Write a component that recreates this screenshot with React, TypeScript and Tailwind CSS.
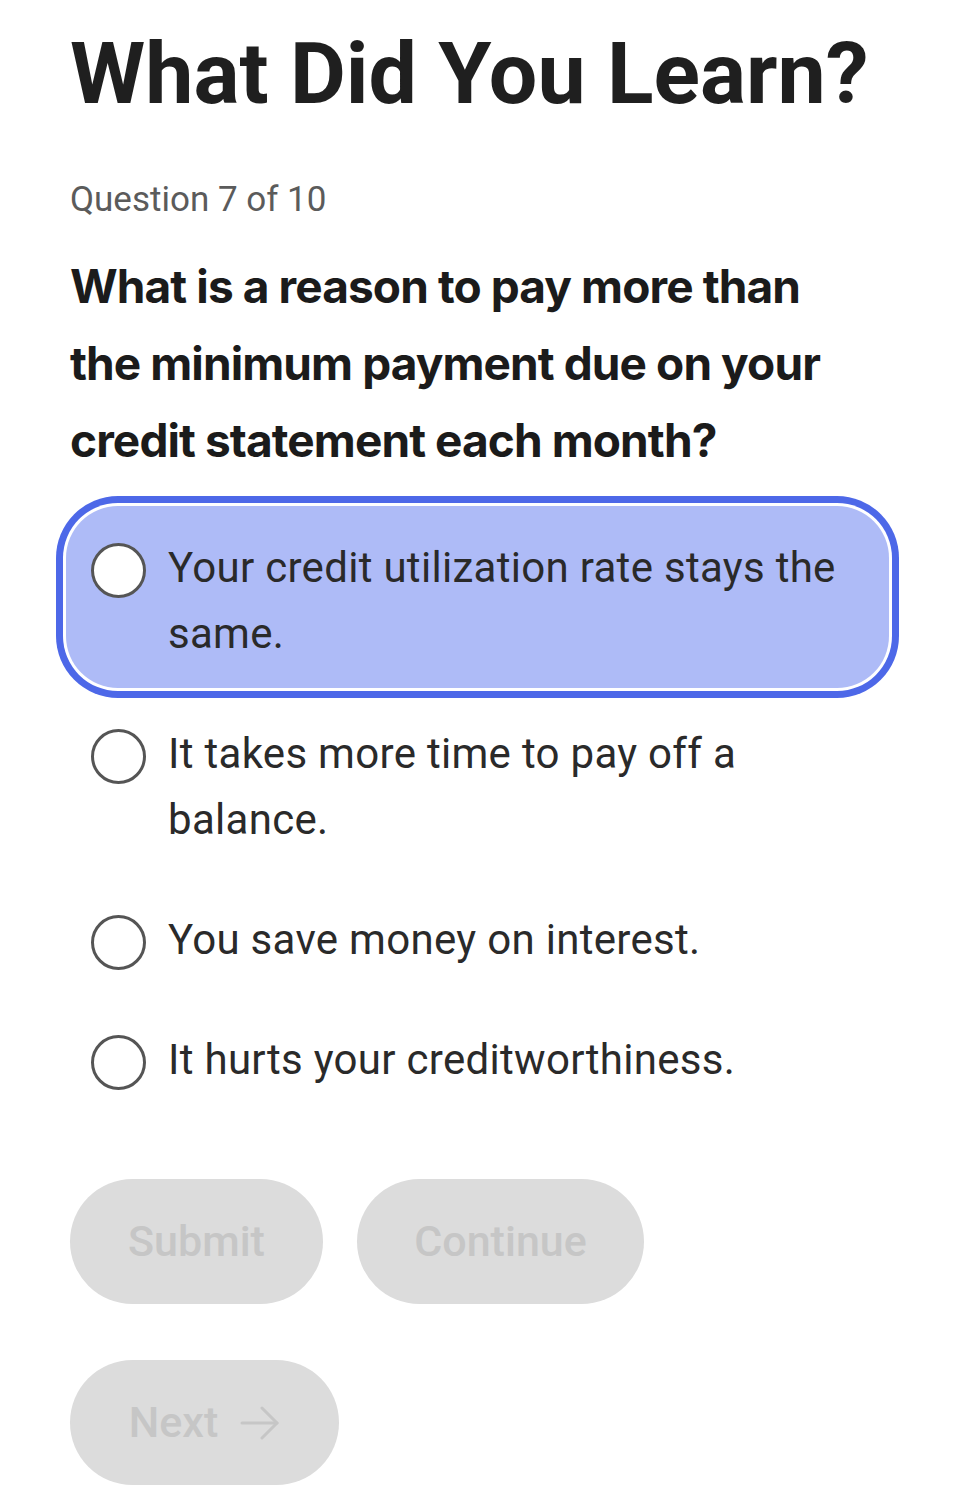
import React, { useState } from "react";

const body = { fontFamily: "Roboto, 'Liberation Sans', sans-serif" };
const strong = { fontFamily: "Inter, 'Noto Sans', sans-serif" };

const options = [
  "Your credit utilization rate stays the same.",
  "It takes more time to pay off a balance.",
  "You save money on interest.",
  "It hurts your creditworthiness.",
];

function Radio() {
  return (
    <span className="mt-[8px] box-border block h-[55px] w-[55px] shrink-0 rounded-full border-[3px] border-[#555555] bg-white" />
  );
}

function ArrowRight() {
  return (
    <svg
      width="40"
      height="34"
      viewBox="0 0 40 34"
      fill="none"
      stroke="#c6c6c6"
      strokeWidth="3"
      strokeLinecap="round"
      strokeLinejoin="round"
    >
      <path d="M2 17h35" />
      <path d="M22 2l15 15-15 15" />
    </svg>
  );
}

export default function App() {
  const [selected, setSelected] = useState(0);
  return (
    <div className="min-h-screen bg-white px-[70px] pt-[31px] pb-[22px]" style={body}>
      <h1 className="text-[86px] font-bold leading-none tracking-normal text-[#1f1f1f]">
        What Did You Learn?
      </h1>
      <p className="mt-[65px] text-[35px] leading-none text-[#5b5b5b]">Question 7 of 10</p>
      <h2
        className="mt-[31px] max-w-[800px] text-[46px] font-bold leading-[77px] tracking-[-0.9px] text-[#1b1b1b]"
        style={strong}
      >
        What is a reason to pay more than the minimum payment due on your credit statement each month?
      </h2>

      <div role="radiogroup" className="-ml-[4px] mt-[27px] flex flex-col gap-[4px]">
        {options.map((label, i) => {
          const active = i === selected;
          return (
            <button
              key={label}
              type="button"
              role="radio"
              aria-checked={active}
              onClick={() => setSelected(i)}
              className={
                "flex items-start gap-[22px] rounded-[52px] pl-[25px] pr-[25px] pt-[29px] pb-[21px] text-left " +
                (active
                  ? "bg-[#aebbf7] shadow-[0_0_0_3px_#ffffff,0_0_0_10px_#4d68e8]"
                  : "bg-transparent")
              }
            >
              <Radio />
              <span className="text-[42px] leading-[66px] tracking-[0.3px] text-[#2a2a2a]">{label}</span>
            </button>
          );
        })}
      </div>

      <div className="mt-[65px] flex gap-[34px]">
        <button
          type="button"
          disabled
          className="h-[125px] w-[253px] rounded-full bg-[#dcdcdc] text-[43px] font-medium text-[#c6c6c6]"
        >
          Submit
        </button>
        <button
          type="button"
          disabled
          className="h-[125px] w-[287px] rounded-full bg-[#dcdcdc] text-[43px] font-medium text-[#c6c6c6]"
        >
          Continue
        </button>
      </div>
      <div className="mt-[56px] flex">
        <button
          type="button"
          disabled
          className="flex h-[125px] w-[269px] items-center justify-center gap-[22px] rounded-full bg-[#dcdcdc] text-[43px] font-medium text-[#c6c6c6]"
        >
          <span>Next</span>
          <ArrowRight />
        </button>
      </div>
    </div>
  );
}
